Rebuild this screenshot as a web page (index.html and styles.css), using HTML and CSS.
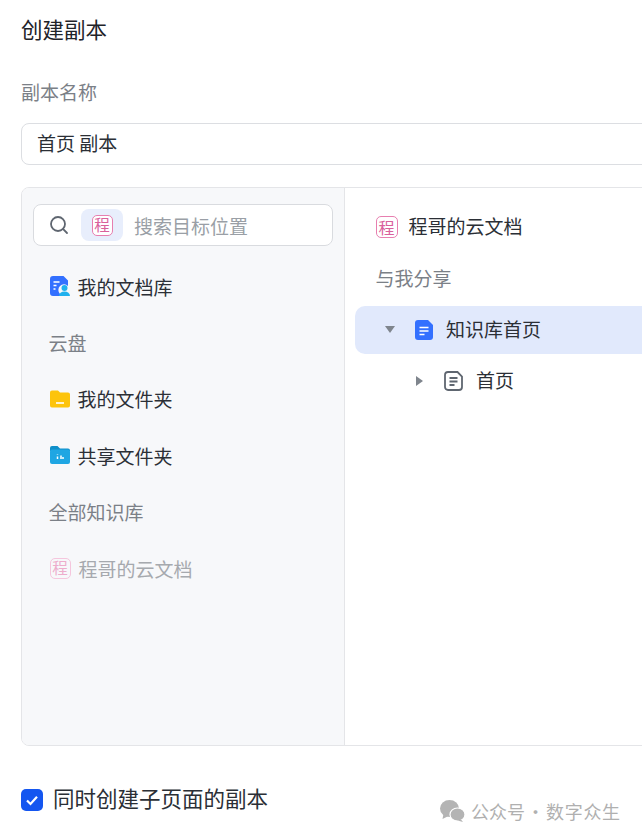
FILE: index.html
```html
<!DOCTYPE html>
<html lang="zh">
<head>
<meta charset="utf-8">
<title>创建副本</title>
<link rel="stylesheet" href="styles.css">
</head>
<body>
<main class="page">
  <h1 class="title">创建副本</h1>
  <div class="label">副本名称</div>
  <div class="input">首页 副本</div>
  <section class="panel">
    <aside class="side">
      <div class="search">
        <svg class="search-icon" width="20" height="20" viewBox="0 0 20 20" fill="none" stroke="#5f6670" stroke-width="1.8" stroke-linecap="round"><circle cx="9" cy="9" r="7"/><path d="M14.2 14.2 18 18"/></svg>
        <span class="chip"><span class="tile">程</span></span>
        <span class="placeholder">搜索目标位置</span>
      </div>
      <div class="row">
        <svg class="icon" width="20" height="20" viewBox="0 0 20 20"><path d="M3 0h10.500L18 4.500V10a5 5 0 0 0-8 8v2H3a3 3 0 0 1-3-3V3a3 3 0 0 1 3-3z" fill="#3370ff"/><path d="M3.500 6h6M3.500 9.500h3M3.500 13h2" stroke="#fff" stroke-width="1.400"/><circle cx="14.500" cy="12" r="3" fill="#1fb1ee"/><path d="M9 20a5.500 4.500 0 0 1 11 0z" fill="#1fb1ee"/></svg>
        <span>我的文档库</span>
      </div>
      <div class="row muted">云盘</div>
      <div class="row">
        <svg class="icon" width="20" height="20" viewBox="0 0 20 20"><path d="M2 1.500h6l2 2h8a2 2 0 0 1 2 2v11a2 2 0 0 1-2 2H2a2 2 0 0 1-2-2V3.500a2 2 0 0 1 2-2z" fill="#fdc40c"/><path d="M6 14h8" stroke="#fff" stroke-width="1.600"/></svg>
        <span>我的文件夹</span>
      </div>
      <div class="row">
        <svg class="icon" width="20" height="20" viewBox="0 0 20 20"><path d="M2 1h5.500L10 3.500h8a2 2 0 0 1 2 2v1H0V3a2 2 0 0 1 2-2z" fill="#0f8fc9"/><rect y="4.500" width="20" height="14.500" rx="2" fill="#1fa6e3"/><path d="M7.500 14v-2.500M7.500 10v-.5M11 14v-3.500M13 14v-2" stroke="#fff" stroke-width="1.500"/></svg>
        <span>共享文件夹</span>
      </div>
      <div class="row muted">全部知识库</div>
      <div class="row faded">
        <span class="tile tile-faded icon">程</span>
        <span>程哥的云文档</span>
      </div>
    </aside>
    <div class="tree">
      <div class="tree-row tree-root">
        <span class="tile tile-lg icon">程</span>
        <span class="tree-text">程哥的云文档</span>
      </div>
      <div class="tree-row tree-root muted"><span class="tree-text">与我分享</span></div>
      <div class="tree-row selected">
        <span class="caret-down"></span>
        <svg class="icon" width="18" height="20" viewBox="0 0 18 20"><path d="M3 0h10l5 5v12a3 3 0 0 1-3 3H3a3 3 0 0 1-3-3V3a3 3 0 0 1 3-3z" fill="#3370ff"/><path d="M4.500 7.500h9M4.500 11h9M4.500 14.500h5" stroke="#fff" stroke-width="1.500"/></svg>
        <span class="tree-text">知识库首页</span>
      </div>
      <div class="tree-row child">
        <span class="caret-right"></span>
        <svg class="icon" width="19" height="20" viewBox="0 0 19 20" fill="none" stroke="#5f6670" stroke-width="1.800"><path d="M4 1h9.500L18 5.500V16a3 3 0 0 1-3 3H4a3 3 0 0 1-3-3V4a3 3 0 0 1 3-3z"/><path d="M5.500 7h8M5.500 10.500h8M5.500 14h5"/></svg>
        <span class="tree-text">首页</span>
      </div>
    </div>
  </section>
  <label class="check-row">
    <svg class="check" width="22" height="22" viewBox="0 0 22 22"><rect width="22" height="22" rx="5" fill="#1456f0"/><path d="M6 11.500l3.500 3.500L16 7.800" fill="none" stroke="#fff" stroke-width="2.200"/></svg>
    <span class="check-text">同时创建子页面的副本</span>
  </label>
</main>
<div class="watermark">
  <svg width="25" height="22" viewBox="0 0 25 22" fill="#b4b4b4"><ellipse cx="9.500" cy="8.500" rx="9.500" ry="8.500"/><path d="M3.500 13.500 2.500 19l6-3z"/><ellipse cx="17.500" cy="14.500" rx="7.500" ry="6.500" stroke="#fff" stroke-width="1.200"/><path d="M21 19.500l2 2.500-5.500-1.500z"/></svg>
  <span>公众号</span><span class="wm-dot">·</span><span class="wm-right">数字众生</span>
</div>
</body>
</html>
```
FILE: styles.css
```css
* { box-sizing: border-box; }
html, body { margin: 0; padding: 0; width: 642px; height: 838px; overflow: hidden; background: #fff; }
body { position: relative; font-family: "Noto Sans CJK SC", "Noto Sans", sans-serif; font-size: 19px; color: #2b2f36; }
.page { width: 700px; padding-left: 21px; }
.title { margin: 0; height: 58px; line-height: 58px; font-size: 21.500px; font-weight: 400; color: #1f2329; }
.label { margin-top: 19px; height: 30px; line-height: 30px; color: #7b8087; }
.input { margin-top: 16px; height: 42px; line-height: 38px; padding-left: 15px; border: 1.500px solid #dcdee2; border-radius: 8px; background: #fff; }
.panel { display: flex; margin-top: 22px; height: 559px; border: 1.500px solid #e4e5e8; border-radius: 8px; overflow: hidden; }
.side { flex: 0 0 323px; background: #f7f8fa; border-right: 1.500px solid #e4e5e8; padding: 16px 10px 0 11px; }
.search { display: flex; align-items: center; width: 300px; height: 42px; padding-left: 14.500px; border: 1.500px solid #d9dbdf; border-radius: 8px; background: #fff; }
.search-icon { flex: none; }
.chip { display: flex; align-items: center; justify-content: center; width: 42px; height: 32px; margin-left: 12.500px; border-radius: 8px; background: #e8eefc; }
.placeholder { margin-left: 11px; color: #9a9fa6; }
.tile { display: inline-flex; align-items: center; justify-content: center; flex: none; width: 21px; height: 21px; border: 1.500px solid #e77fb0; border-radius: 5px; background: #fff; color: #d9619c; font-size: 15.500px; line-height: 1; }
.tile-lg { width: 22px; height: 22px; font-size: 16px; }
.tile-faded { border-color: #f5c6dd; color: #edadcc; background: transparent; }
.row { display: flex; align-items: center; height: 56.400px; padding-left: 15.500px; }
.search + .row { margin-top: 12px; }
.row .icon { margin-left: 1px; margin-right: 8px; flex: none; }
.muted { color: #7b8087; }
.faded { color: #a6a9ae; }
.tree { flex: 1; padding: 12.500px 0 0 10px; background: #fff; }
.tree-row { display: flex; align-items: center; height: 52px; }
.tree-text { margin-bottom: 2px; }
.tree-root { padding-left: 20.500px; }
.tree-root .icon { margin-right: 11px; }
.selected { height: 48px; margin-top: 1px; padding-left: 30px; background: #e1e9fc; border-radius: 10px 0 0 10px; }
.selected .icon { margin-left: 20px; margin-right: 13px; }
.child { margin-top: 1px; padding-left: 61px; }
.child .icon { margin-left: 21px; margin-right: 13px; }
.caret-down { flex: none; width: 0; height: 0; border-left: 5.500px solid transparent; border-right: 5.500px solid transparent; border-top: 7px solid #7f858d; }
.caret-right { flex: none; width: 0; height: 0; border-top: 5.500px solid transparent; border-bottom: 5.500px solid transparent; border-left: 7px solid #7f858d; }
.check-row { display: flex; align-items: center; margin-top: 38px; height: 32px; font-size: 21.500px; }
.check { flex: none; margin-right: 10px; }
.check-text { margin-bottom: 6px; }
.watermark { position: absolute; left: 440px; top: 799px; display: flex; align-items: center; height: 24px; font-size: 18px; color: #b0b0b0; }
.watermark svg { margin-right: 6px; }
.wm-dot { margin: 0 1.500px; }
.wm-right { letter-spacing: 0.700px; }
```
